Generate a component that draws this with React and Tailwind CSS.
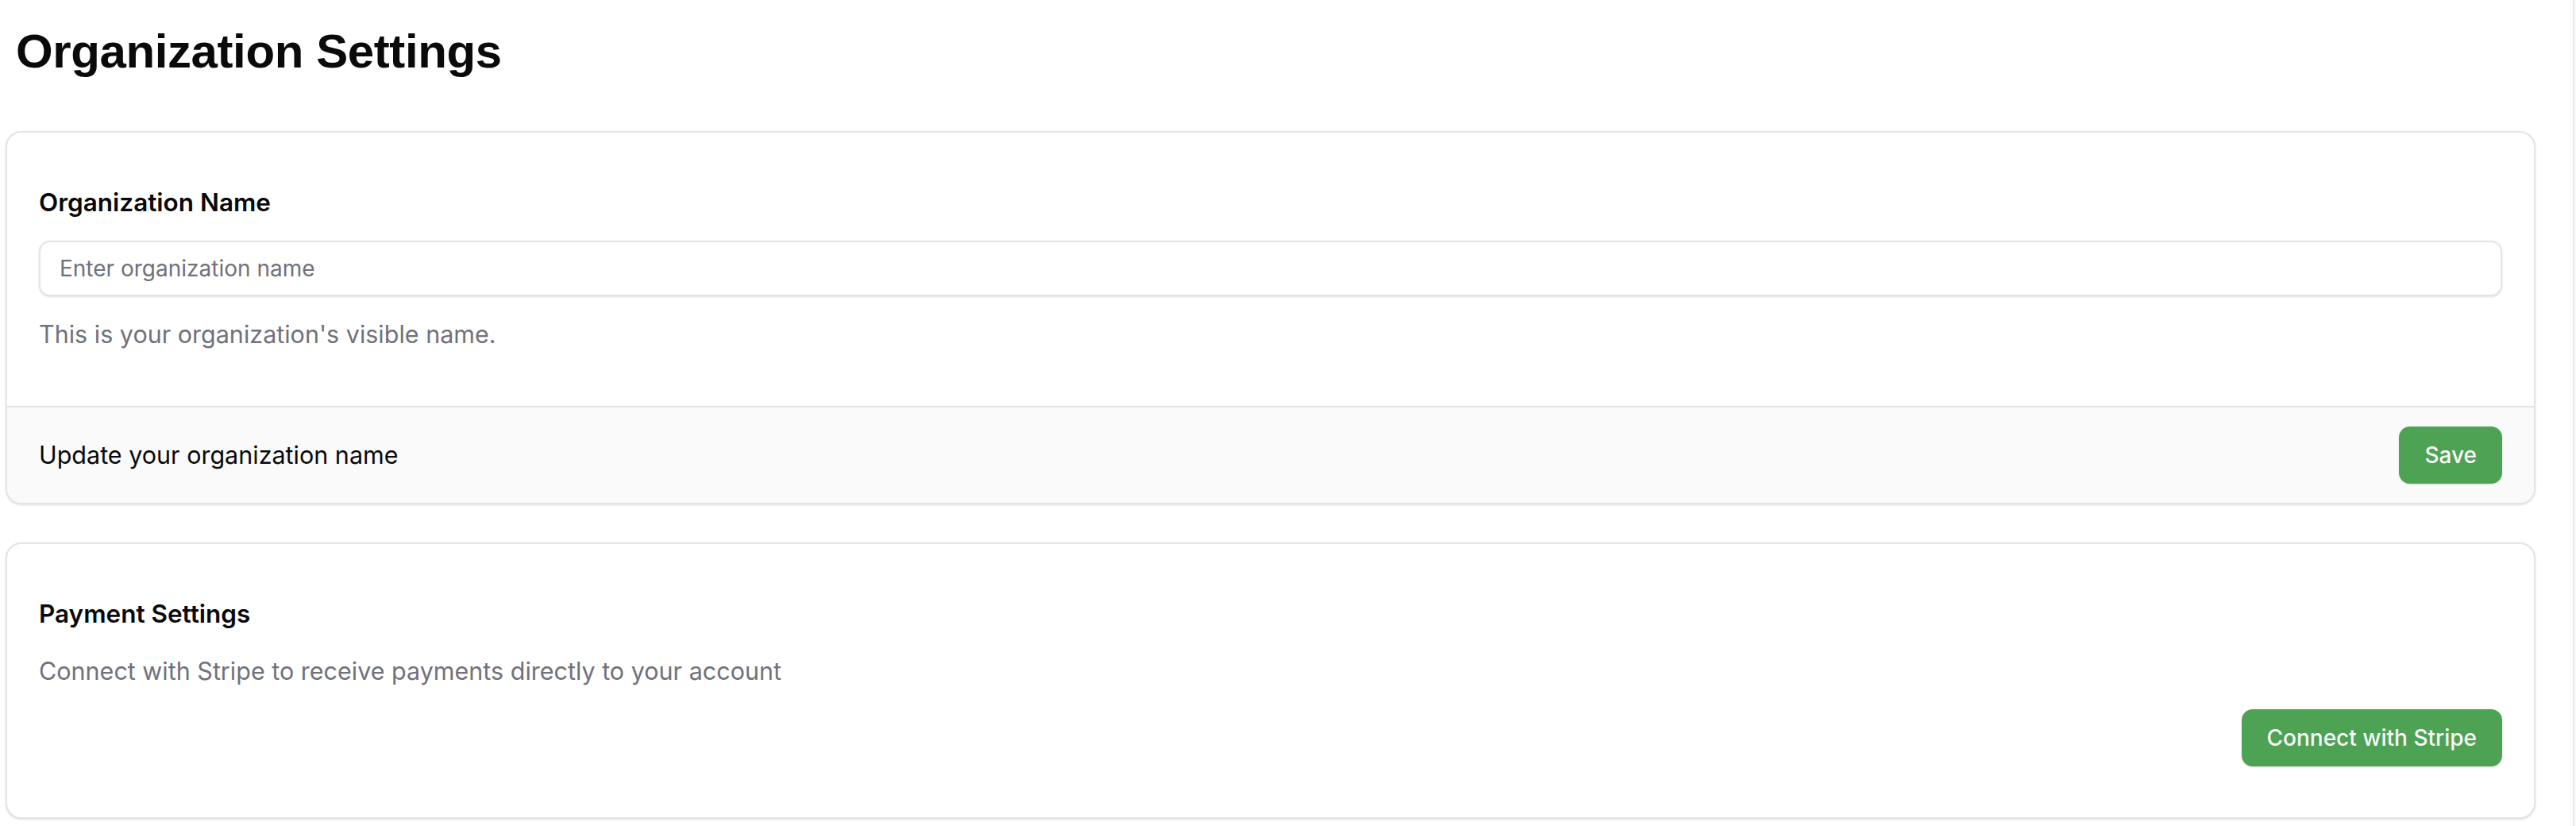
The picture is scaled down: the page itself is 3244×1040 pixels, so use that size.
export default function App() {
  return (
    <div className="flex min-h-screen bg-white font-['Inter',sans-serif] text-[#09090b]">
      <main className="flex-1 pb-[10px] pl-[7px] pr-[47px] pt-[29px]">
        <h1 className="ml-[13px] font-['Liberation_Sans',Arial,sans-serif] text-[60px] font-bold leading-[72px] tracking-[-0.4px] text-[#0a0a0a]">
          Organization Settings
        </h1>

        <div className="mt-[64px] flex flex-col gap-[48px]">
          {/* Organization name */}
          <section className="overflow-hidden rounded-[20px] border-2 border-[#e4e4e7] bg-white shadow-sm">
            <div className="flex flex-col gap-[24px] px-[40px] pb-[66px] pt-[64px]">
              <label className="text-[31.5px] font-semibold leading-[48px]">Organization Name</label>
              <input
                placeholder="Enter organization name"
                className="h-[70px] rounded-[14px] border-2 border-[#e4e4e7] bg-white px-[24px] text-[28px] shadow-sm outline-none placeholder:text-[#71717a]"
              />
              <p className="text-[30.5px] leading-[48px] text-[#71717a]">This is your organization's visible name.</p>
            </div>
            <div className="flex items-center justify-between border-t-2 border-[#e4e4e7] bg-[#fafafa] px-[40px] py-[24px]">
              <span className="text-[30.5px] leading-[48px]">Update your organization name</span>
              <button className="h-[72px] rounded-[14px] bg-[#4da254] px-[32px] text-[28px] font-medium text-[#fafafa] shadow-sm">
                Save
              </button>
            </div>
          </section>

          {/* Payment */}
          <section className="rounded-[20px] border-2 border-[#e4e4e7] bg-white shadow-sm">
            <div className="flex flex-col gap-[24px] px-[40px] pb-[64px] pt-[64px]">
              <h2 className="text-[31.5px] font-semibold leading-[48px]">Payment Settings</h2>
              <p className="text-[30.5px] leading-[48px] text-[#71717a]">
                Connect with Stripe to receive payments directly to your account
              </p>
              <div className="flex justify-end">
                <button className="h-[72px] rounded-[14px] bg-[#4da254] px-[32px] text-[28px] font-medium text-[#fafafa] shadow-sm">
                  Connect with Stripe
                </button>
              </div>
            </div>
          </section>
        </div>
      </main>
      <div className="w-[4px] border-l-2 border-[#e8e8e8] bg-[#fafafa]" />
    </div>
  );
}
